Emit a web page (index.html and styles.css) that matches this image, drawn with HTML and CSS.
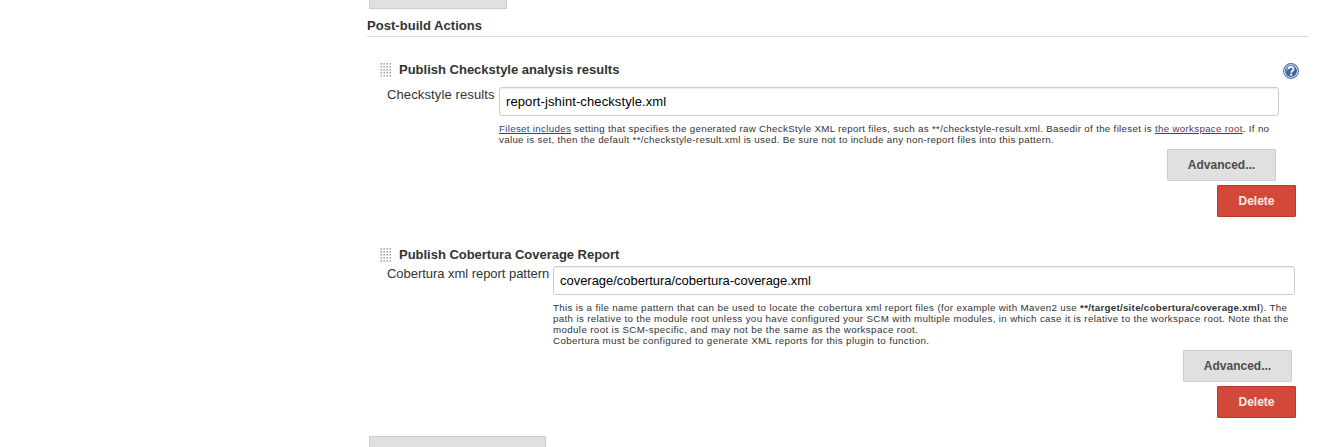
FILE: index.html
```
<!DOCTYPE html>
<html lang="en">
<head>
<meta charset="utf-8">
<title>Post-build Actions</title>
<link rel="stylesheet" href="styles.css">
</head>
<body>
<main class="config">
  <div class="stub stub-top"></div>
  <h2 class="section-title">Post-build Actions</h2>

  <section class="block">
    <header class="block-head">
      <svg class="grip" width="12" height="15" viewBox="0 0 12 15"><defs><pattern id="dots" width="3" height="3" patternUnits="userSpaceOnUse"><rect width="2" height="2" fill="#d4d4d4"/><rect x="1" width="1" height="1" fill="#a2a2a2"/></pattern></defs><rect width="12" height="15" fill="url(#dots)"/></svg>
      <h3 class="block-title title-a">Publish Checkstyle analysis results</h3>
      <svg class="help-icon" width="16" height="16" viewBox="0 0 16 16"><circle cx="8" cy="8" r="7.4" fill="#fff" stroke="#456ca6" stroke-width="1.1"/><circle cx="8" cy="8" r="6" fill="#3c65a2"/><path d="M3 10A5.3 5.3 0 0 1 9 2.8Q5 5 3 10Z" fill="#6f92c2"/><path d="M5.6 6.2C5.6 3.2 10.6 3.2 10.6 6C10.6 7.7 8.2 7.7 8.2 9.7" fill="none" stroke="#fff" stroke-width="1.8"/><rect x="7.2" y="10.7" width="2" height="1.9" fill="#fff"/></svg>
    </header>
    <div class="field">
      <label class="label label-a" for="a">Checkstyle results</label>
      <div class="control control-a">
        <input class="text text-a" id="a" type="text" value="report-jshint-checkstyle.xml">
        <div class="hint">
          <span class="line l1"><a class="link" href="#">Fileset includes</a> setting that specifies the generated raw CheckStyle XML report files, such as **/checkstyle-result.xml. Basedir of the fileset is <a class="link visited" href="#">the workspace root</a>. If no</span>
          <span class="line l2">value is set, then the default **/checkstyle-result.xml is used. Be sure not to include any non-report files into this pattern.</span>
        </div>
      </div>
    </div>
    <div class="actions">
      <button class="button advanced-a">Advanced...</button>
      <button class="button danger">Delete</button>
    </div>
  </section>

  <section class="block block-b">
    <header class="block-head">
      <svg class="grip" width="12" height="15" viewBox="0 0 12 15"><rect width="12" height="15" fill="url(#dots)"/></svg>
      <h3 class="block-title title-b">Publish Cobertura Coverage Report</h3>
    </header>
    <div class="field">
      <label class="label label-b" for="b">Cobertura xml report pattern</label>
      <div class="control control-b">
        <input class="text text-b" id="b" type="text" value="coverage/cobertura/cobertura-coverage.xml">
        <div class="hint">
          <span class="line l3">This is a file name pattern that can be used to locate the cobertura xml report files (for example with Maven2 use <b class="path">**/target/site/cobertura/coverage.xml</b>). The</span>
          <span class="line l4">path is relative to the module root unless you have configured your SCM with multiple modules, in which case it is relative to the workspace root. Note that the</span>
          <span class="line l5">module root is SCM-specific, and may not be the same as the workspace root.</span>
          <span class="line l6">Cobertura must be configured to generate XML reports for this plugin to function.</span>
        </div>
      </div>
    </div>
    <div class="actions">
      <button class="button advanced-b">Advanced...</button>
      <button class="button danger">Delete</button>
    </div>
  </section>
  <div class="stub stub-bottom"></div>
</main>
</body>
</html>
```
FILE: styles.css
```
* { box-sizing: border-box; }
body {
  margin: 0;
  height: 447px;
  overflow: hidden;
  background: #fff;
  color: #333;
  font: 13px "Liberation Sans", Arial, sans-serif;
}
.config { margin-left: 367px; width: 942px; }
.stub { margin-left: 2px; background: #e0e0e0; border: 1px solid #ccc; }
.stub-top { width: 138px; height: 9px; border-top: 0; }
.stub-bottom { width: 177px; height: 11px; margin-top: 18px; border-bottom: 0; }
.section-title {
  margin: 6px 0 0;
  height: 22px;
  border-bottom: 1px solid #ddd;
  font-size: 13px;
  line-height: 21px;
  letter-spacing: .04px;
}
.block { padding: 23px 13px 0; }
.block-b { padding-top: 28px; }
.block-head { display: flex; align-items: flex-start; height: 27px; }
.block-b .block-head { height: 21px; }
.grip { margin-top: 3px; }
.block-title { margin: 0 0 0 7px; font-size: 13px; line-height: 20px; white-space: nowrap; }
.title-b { letter-spacing: -.02px; }
.help-icon { margin: 3px -3px 0 auto; }
.field { display: flex; padding-left: 7px; }
.label { flex: none; line-height: 15px; white-space: nowrap; }
.label-a { width: 112px; letter-spacing: .12px; }
.label-b { width: 166px; letter-spacing: -.04px; }
.control-a { width: 780px; }
.control-b { width: 742px; }
.text {
  display: block;
  width: 100%;
  height: 29px;
  padding: 0 6px;
  border: 1px solid #ccc;
  border-radius: 3px;
  box-shadow: inset 0 1px 1px rgba(0, 0, 0, .075);
  color: #000;
  font: inherit;
}
.text-a { letter-spacing: .1px; }
.text-b { letter-spacing: -.03px; }
.hint { padding: 7px 0 1px; font-size: 9.75px; line-height: 11px; }
.line { display: block; width: max-content; white-space: nowrap; }
.l1 { letter-spacing: .306px; }
.l2 { letter-spacing: .304px; }
.l3 { letter-spacing: .342px; }
.l4 { letter-spacing: .346px; }
.l5 { letter-spacing: .367px; }
.l6 { letter-spacing: .354px; }
.path { letter-spacing: .275px; }
.link { color: #204a87; }
.visited { color: #5c3566; }
.actions { display: flex; flex-direction: column; align-items: flex-end; gap: 4px; padding-top: 3px; }
.button {
  width: 109px;
  height: 32px;
  padding: 0;
  border: 1px solid #ccc;
  border-radius: 1px;
  background: #e0e0e0;
  color: #4d4d4d;
  font: bold 12px "Liberation Sans", Arial, sans-serif;
}
.advanced-a { margin-right: 20px; }
.advanced-b { margin-right: 4px; }
.danger { width: 79px; border-color: #b93a2b; background: #d24939; color: #f5e9e8; }
```
